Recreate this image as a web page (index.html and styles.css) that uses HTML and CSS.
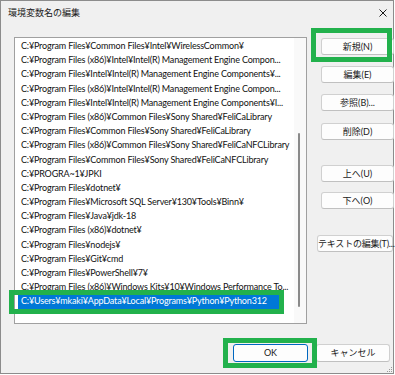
FILE: index.html
```html
<!DOCTYPE html>
<html lang="ja">
<head>
<meta charset="utf-8">
<title>環境変数名の編集</title>
<link rel="stylesheet" href="styles.css">
</head>
<body>
<div class="dialog">
  <div class="titlebar">
    <span class="title">環境変数名の編集</span>
    <svg class="close" width="8" height="8" viewBox="0 0 8 8"><path d="M0.5 0.5 L7.5 7.5 M7.5 0.5 L0.5 7.5" stroke="#1a1a1a" stroke-width="1" fill="none"/></svg>
  </div>
  <div class="body">
    <div class="listbox">
      <div class="rows">
        <div class="row"><span class="cell">C:¥Program Files¥Common Files¥Intel¥WirelessCommon¥</span></div>
        <div class="row"><span class="cell">C:¥Program Files (x86)¥Intel¥Intel(R) Management Engine Compon...</span></div>
        <div class="row"><span class="cell">C:¥Program Files¥Intel¥Intel(R) Management Engine Components¥...</span></div>
        <div class="row"><span class="cell">C:¥Program Files (x86)¥Intel¥Intel(R) Management Engine Compon...</span></div>
        <div class="row"><span class="cell">C:¥Program Files¥Intel¥Intel(R) Management Engine Components¥I...</span></div>
        <div class="row"><span class="cell">C:¥Program Files (x86)¥Common Files¥Sony Shared¥FeliCaLibrary</span></div>
        <div class="row"><span class="cell">C:¥Program Files¥Common Files¥Sony Shared¥FeliCaLibrary</span></div>
        <div class="row"><span class="cell">C:¥Program Files (x86)¥Common Files¥Sony Shared¥FeliCaNFCLibrary</span></div>
        <div class="row"><span class="cell">C:¥Program Files¥Common Files¥Sony Shared¥FeliCaNFCLibrary</span></div>
        <div class="row"><span class="cell">C:¥PROGRA~1¥JPKI</span></div>
        <div class="row"><span class="cell">C:¥Program Files¥dotnet¥</span></div>
        <div class="row"><span class="cell">C:¥Program Files¥Microsoft SQL Server¥130¥Tools¥Binn¥</span></div>
        <div class="row"><span class="cell">C:¥Program Files¥Java¥jdk-18</span></div>
        <div class="row"><span class="cell">C:¥Program Files (x86)¥dotnet¥</span></div>
        <div class="row"><span class="cell">C:¥Program Files¥nodejs¥</span></div>
        <div class="row"><span class="cell">C:¥Program Files¥Git¥cmd</span></div>
        <div class="row"><span class="cell">C:¥Program Files¥PowerShell¥7¥</span></div>
        <div class="row"><span class="cell">C:¥Program Files (x86)¥Windows Kits¥10¥Windows Performance To...</span></div>
        <div class="row selected"><span class="cell">C:¥Users¥mkaki¥AppData¥Local¥Programs¥Python¥Python312</span></div>
      </div>
      <div class="vscroll"><div class="thumb"></div></div>
    </div>
    <div class="side">
      <button class="btn b-new">新規(N)</button>
      <button class="btn b-gap">編集(E)</button>
      <button class="btn b-gap">参照(B)...</button>
      <button class="btn b-gap">削除(D)</button>
      <button class="btn b-up">上へ(U)</button>
      <button class="btn b-down">下へ(O)</button>
      <button class="btn b-text">テキストの編集(T)...</button>
    </div>
  </div>
  <div class="footer">
    <button class="btn btn-ok">OK</button>
    <button class="btn btn-cancel">キャンセル</button>
  </div>
  <svg class="grip" width="7" height="7" viewBox="0 0 7 7">
    <rect x="5" y="1" width="1" height="1" fill="#9a9a9a"/>
    <rect x="3" y="3" width="1" height="1" fill="#9a9a9a"/>
    <rect x="5" y="3" width="1" height="1" fill="#9a9a9a"/>
    <rect x="1" y="5" width="1" height="1" fill="#9a9a9a"/>
    <rect x="3" y="5" width="1" height="1" fill="#9a9a9a"/>
    <rect x="5" y="5" width="1" height="1" fill="#9a9a9a"/>
  </svg>
  <div class="mark mark-new"></div>
  <div class="mark mark-row"></div>
  <div class="mark mark-ok"></div>
</div>
</body>
</html>
```

FILE: styles.css
```css
* { box-sizing: border-box; }
html, body {
  margin: 0;
  padding: 0;
  background: #ffffff;
}
body {
  font-family: Lato, "Noto Sans CJK JP", sans-serif;
  font-size: 9px;
  color: #1a1a1a;
}
.dialog {
  position: relative;
  width: 394px;
  height: 374px;
  background: #f0f0f0;
  border: 1px solid #8c8c8c;
  display: flex;
  flex-direction: column;
}
.titlebar {
  height: 28px;
  flex: none;
  display: flex;
  align-items: flex-start;
  justify-content: space-between;
  padding: 5px 6px 0 7px;
}
.title {
  font-family: "Noto Sans CJK JP", sans-serif;
  font-size: 9px;
  line-height: 13px;
  color: #1a1a1a;
}
.close {
  margin-top: 3px;
}
.body {
  display: flex;
  margin-top: 8px;
  padding-left: 13px;
  padding-right: 3px;
}
.listbox {
  width: 293px;
  height: 287px;
  background: #ffffff;
  border: 1px solid #a0a0a0;
  display: flex;
  flex: none;
}
.rows {
  flex: 1;
  padding-top: 1px;
  padding-left: 3px;
  overflow: hidden;
  letter-spacing: -0.17px;
}
.row {
  height: 14.2px;
  line-height: 14.2px;
  white-space: nowrap;
  overflow: hidden;
  color: #111111;
}
.cell {
  display: inline-block;
  padding-left: 3px;
}
.row.selected .cell {
  background: #0078d7;
  color: #ffffff;
  width: 263px;
}
.vscroll {
  width: 12px;
  flex: none;
  background: #f9f9f9;
  padding-top: 95px;
  padding-left: 4px;
}
.thumb {
  width: 2px;
  height: 174px;
  background: #8a8a8a;
  border-radius: 1px;
}
.side {
  display: flex;
  flex-direction: column;
  align-items: flex-end;
  margin-left: 10px;
  flex: 1;
}
.btn {
  font-family: Lato, "Noto Sans CJK JP", sans-serif;
  font-size: 9px;
  color: #1a1a1a;
  background: #fdfdfd;
  border: 1px solid #d0d0d0;
  border-bottom-color: #c0c0c0;
  border-radius: 3px;
  height: 17px;
  width: 73px;
  padding: 0;
  line-height: 15px;
  text-align: center;
  white-space: nowrap;
}
.b-new { margin-top: 1px; }
.b-gap { margin-top: 11.2px; }
.b-up { margin-top: 25.4px; }
.b-down { margin-top: 10.3px; }
.b-text { margin-top: 25.7px; width: 76px; margin-right: 1px; letter-spacing: -0.2px; }
.footer {
  display: flex;
  justify-content: flex-end;
  gap: 8px;
  margin-top: 20px;
  padding-right: 3px;
}
.btn-ok {
  width: 75px;
  height: 18px;
  border: 1px solid #0067c0;
  line-height: 16px;
}
.btn-cancel {
  width: 74px;
  height: 18px;
  line-height: 16px;
}
.grip {
  position: absolute;
  right: 0;
  bottom: 0;
}
.mark {
  position: absolute;
  border: 5px solid #22b14c;
}
.mark-new { left: 310px; top: 27px; width: 81px; height: 34px; }
.mark-row { left: 8px; top: 289px; width: 275px; height: 24px; }
.mark-ok { left: 222px; top: 337px; width: 94px; height: 30px; }
```
